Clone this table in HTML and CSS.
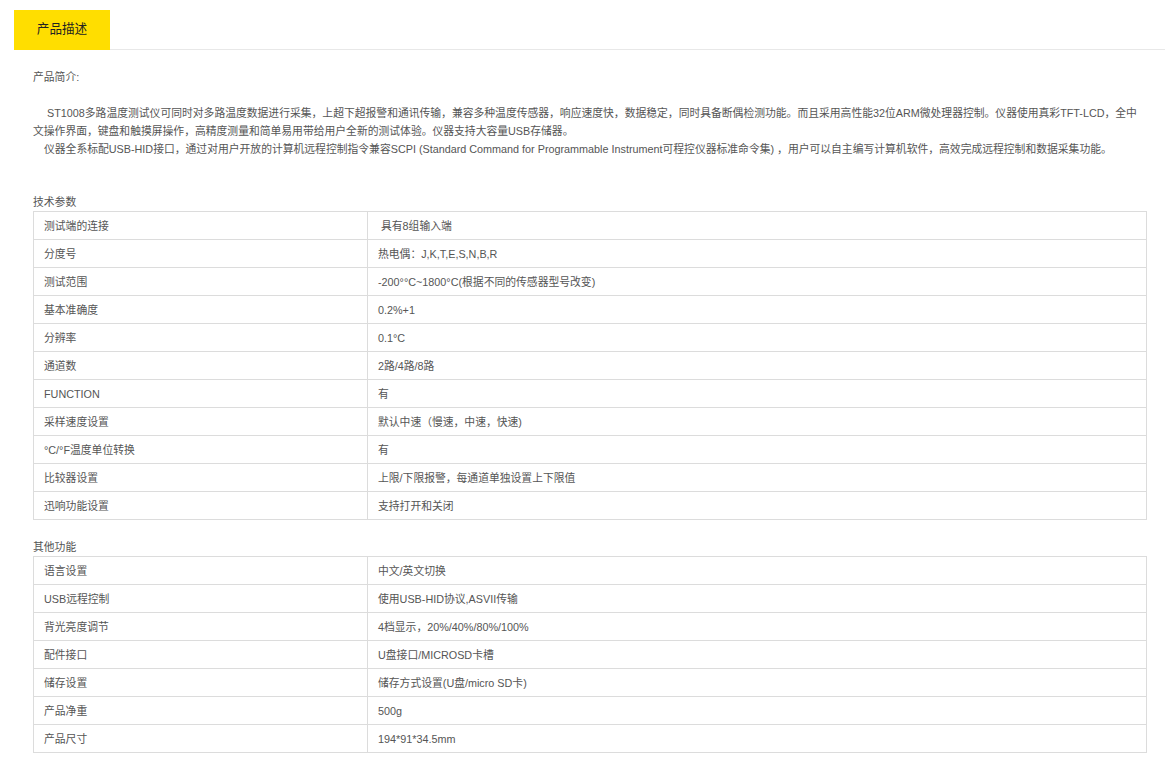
FILE: index.html
```html
<!DOCTYPE html>
<html lang="zh-CN">
<head>
<meta charset="utf-8">
<title>产品描述</title>
<link rel="stylesheet" href="styles.css">
</head>
<body>
<div class="page">
  <div class="tabs">
    <div class="tab active">产品描述</div>
  </div>
  <div class="content">
    <p class="intro-title">产品简介:</p>
    <p class="para first">ST1008多路温度测试仪可同时对多路温度数据进行采集，上超下超报警和通讯传输，兼容多种温度传感器，响应速度快，数据稳定，同时具备断偶检测功能。而且采用高性能32位ARM微处理器控制。仪器使用真彩TFT-LCD，全中文操作界面，键盘和触摸屏操作，高精度测量和简单易用带给用户全新的测试体验。仪器支持大容量USB存储器。</p>
    <p class="para second">仪器全系标配USB-HID接口，通过对用户开放的计算机远程控制指令兼容SCPI (Standard Command for Programmable Instrument可程控仪器标准命令集) ，用户可以自主编写计算机软件，高效完成远程控制和数据采集功能。</p>

    <h3 class="section-title tech">技术参数</h3>
    <table class="spec">
      <tr><td class="k">测试端的连接</td><td class="v">&nbsp;具有8组输入端</td></tr>
      <tr><td class="k">分度号</td><td class="v">热电偶：J,K,T,E,S,N,B,R</td></tr>
      <tr><td class="k">测试范围</td><td class="v">-200°°C~1800°C(根据不同的传感器型号改变)</td></tr>
      <tr><td class="k">基本准确度</td><td class="v">0.2%+1</td></tr>
      <tr><td class="k">分辨率</td><td class="v">0.1°C</td></tr>
      <tr><td class="k">通道数</td><td class="v">2路/4路/8路</td></tr>
      <tr><td class="k">FUNCTION</td><td class="v">有</td></tr>
      <tr><td class="k">采样速度设置</td><td class="v">默认中速（慢速，中速，快速)</td></tr>
      <tr><td class="k">°C/°F温度单位转换</td><td class="v">有</td></tr>
      <tr><td class="k">比较器设置</td><td class="v">上限/下限报警，每通道单独设置上下限值</td></tr>
      <tr><td class="k">迅响功能设置</td><td class="v">支持打开和关闭</td></tr>
    </table>

    <h3 class="section-title other">其他功能</h3>
    <table class="spec">
      <tr><td class="k">语言设置</td><td class="v">中文/英文切换</td></tr>
      <tr><td class="k">USB远程控制</td><td class="v">使用USB-HID协议,ASVII传输</td></tr>
      <tr><td class="k">背光亮度调节</td><td class="v">4档显示，20%/40%/80%/100%</td></tr>
      <tr><td class="k">配件接口</td><td class="v">U盘接口/MICROSD卡槽</td></tr>
      <tr><td class="k">储存设置</td><td class="v">储存方式设置(U盘/micro SD卡)</td></tr>
      <tr><td class="k">产品净重</td><td class="v">500g</td></tr>
      <tr><td class="k">产品尺寸</td><td class="v">194*91*34.5mm</td></tr>
    </table>
  </div>
</div>
</body>
</html>
```

FILE: styles.css
```css
html, body {
  margin: 0;
  padding: 0;
  background: #fff;
}

body {
  font-family: "Liberation Sans", Arial, "Noto Sans CJK SC", sans-serif;
  font-size: 10.8px;
  color: #555;
}

.page {
  padding: 10px 7px 0 14px;
}

.tabs {
  display: flex;
  border-bottom: 1px solid #e8e8e8;
}

.tab {
  width: 96px;
  height: 40px;
  line-height: 38px;
  text-align: center;
  font-size: 12.6px;
  color: #222;
  margin-bottom: -1px;
}

.tab.active {
  background: #ffde00;
}

.content {
  padding: 18px 18px 0 19px;
}

.intro-title {
  margin: 0 0 18px;
  line-height: 18px;
}

.para {
  margin: 0;
  line-height: 18px;
}

.para.first {
  text-indent: 14px;
}

.para.second {
  text-indent: 11px;
}

.section-title {
  margin: 0;
  font-weight: normal;
  font-size: 10.8px;
  line-height: 18px;
  color: #555;
}

.section-title.tech {
  margin-top: 35px;
}

.section-title.other {
  margin-top: 18px;
}

.spec {
  width: 1114px;
  border-collapse: collapse;
  table-layout: fixed;
}

.spec td {
  border: 1px solid #dcdcdc;
  height: 27px;
  padding: 0 10px;
  line-height: 16px;
  vertical-align: middle;
  color: #555;
}

.spec td.k {
  width: 313px;
}
```
